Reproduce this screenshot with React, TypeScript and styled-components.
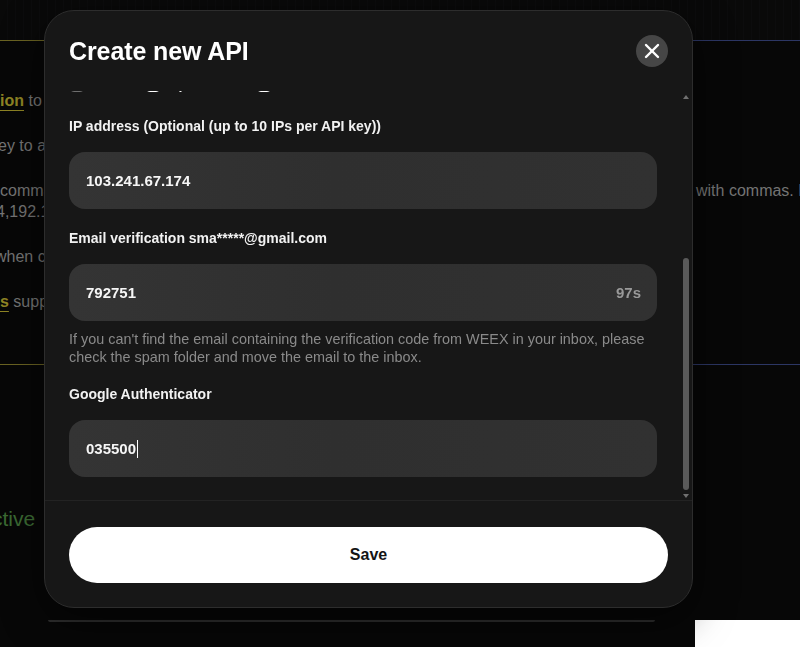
import React, { useEffect, useRef } from "react";
import styled, { createGlobalStyle } from "styled-components";
import { X } from "lucide-react";

const GlobalStyle = createGlobalStyle`
  html, body {
    margin: 0;
    padding: 0;
    background: #070707;
  }
  body {
    font-family: "Liberation Sans", Arial, sans-serif;
    overflow: hidden;
  }
  * {
    box-sizing: border-box;
  }
`;

/* ---------- page behind the dialog ---------- */

const Page = styled.div`
  width: 800px;
  height: 647px;
  overflow: hidden;
  background: #070707;
  display: flex;
  flex-direction: column;
`;

const TopStrip = styled.div`
  height: 40px;
  flex-shrink: 0;
  background: repeating-linear-gradient(90deg, #090909 0 7px, #0c0c0d 7px 8px);
`;

const Notice = styled.section`
  height: 325px;
  flex-shrink: 0;
  border-top: 1px solid;
  border-bottom: 1px solid;
  border-image: linear-gradient(90deg, #6a6322 0%, #6a6322 9%, #2c3664 86%, #2c3664 100%) 1;
  padding-top: 49px;
  display: flex;
  flex-direction: column;
  gap: 24px;
  color: #747474;
  font-size: 16px;
  line-height: 21px;
`;

const Para = styled.p<{ $shift?: number }>`
  margin: 0;
  white-space: nowrap;
  text-indent: ${(p) => p.$shift ?? 0}px;
`;

const SplitLine = styled.div`
  display: flex;
  white-space: nowrap;
`;

const HiddenPart = styled.span`
  flex: 0 0 696px;
`;

const NoticeLink = styled.a`
  color: #8e8424;
  font-weight: 700;
  text-decoration: underline;
  text-underline-offset: 4px;
`;

const StatusText = styled.div`
  margin-top: 142px;
  margin-left: -8px;
  font-size: 21px;
  color: #3b6a33;
`;

const BottomRow = styled.div`
  margin-top: auto;
  height: 27px;
  display: flex;
  align-items: flex-start;
`;

const CardEdge = styled.div`
  margin-left: 48px;
  width: 607px;
  height: 2px;
  background: #2f2f2f;
  border-radius: 0 0 4px 4px;
`;

const WhiteTab = styled.div`
  margin-left: 40px;
  flex: 1;
  align-self: stretch;
  background: #ffffff;
`;

/* ---------- dialog ---------- */

const Modal = styled.div`
  position: fixed;
  top: 10px;
  left: 44px;
  width: 649px;
  height: 598px;
  background: #171717;
  border: 1px solid #2d2d2d;
  border-radius: 30px;
  display: flex;
  flex-direction: column;
  overflow: hidden;
  box-shadow: 0 12px 40px rgba(0, 0, 0, 0.55);
`;

const Header = styled.header`
  display: flex;
  align-items: center;
  justify-content: space-between;
  padding: 24px 24px 24px 24px;
`;

const Title = styled.h2`
  margin: 0;
  font-size: 25px;
  font-weight: 700;
  color: #ffffff;
  letter-spacing: -0.1px;
`;

const CloseButton = styled.button`
  width: 32px;
  height: 32px;
  border: 0;
  border-radius: 50%;
  background: #464646;
  color: #ffffff;
  display: flex;
  align-items: center;
  justify-content: center;
  padding: 0;
`;

const BodyWrap = styled.div`
  position: relative;
  flex: 1;
  min-height: 0;
  display: flex;
`;

const Body = styled.div`
  flex: 1;
  overflow-y: scroll;
  scrollbar-width: none;
  padding: 8px 35px 23px 24px;
  display: flex;
  flex-direction: column;
  gap: 19px;
  &::-webkit-scrollbar {
    display: none;
  }
`;

const ScrollRail = styled.div`
  position: absolute;
  top: 4px;
  bottom: 2px;
  right: 3px;
  width: 7px;
  display: flex;
  flex-direction: column;
  align-items: center;
  pointer-events: none;
`;

const Arrow = styled.span<{ $down?: boolean }>`
  width: 0;
  height: 0;
  border-left: 3px solid transparent;
  border-right: 3px solid transparent;
  ${(p) => (p.$down ? "border-top: 4px solid #707070;" : "border-bottom: 4px solid #707070;")}
`;

const Track = styled.div`
  flex: 1;
  width: 100%;
  display: flex;
  flex-direction: column;
  justify-content: flex-end;
  padding-bottom: 4px;
`;

const Thumb = styled.div`
  height: 232px;
  width: 6px;
  margin: 0 auto;
  border-radius: 3px;
  background: #5a5a5a;
`;

const Field = styled.div<{ $after?: number }>`
  display: flex;
  flex-direction: column;
  flex-shrink: 0;
  margin-bottom: ${(p) => p.$after ?? 0}px;
`;

const Label = styled.label`
  font-size: 14px;
  line-height: 20px;
  font-weight: 700;
  color: #f2f2f2;
  margin-bottom: 16px;
`;

const InputBox = styled.div`
  height: 57px;
  border-radius: 16px;
  background: linear-gradient(90deg, #343434 0%, #2f2f2f 45%, #313131 100%);
  padding: 0 16px 0 17px;
  display: flex;
  align-items: center;
  justify-content: space-between;
  font-size: 15px;
  font-weight: 700;
  color: #f6f6f6;
`;

const Value = styled.span`
  display: flex;
  align-items: center;
`;

const Caret = styled.span`
  width: 1px;
  height: 18px;
  background: #ffffff;
  margin-left: 1px;
`;

const Countdown = styled.span`
  color: #9a9a9a;
`;

const Help = styled.p`
  margin: 9px 0 -1px;
  font-size: 14.4px;
  line-height: 18px;
  color: #8a8a8a;
`;

const Options = styled.div`
  display: flex;
  gap: 18px;
  font-size: 14px;
  line-height: 20px;
  font-weight: 700;
`;

const Option = styled.span<{ $muted?: boolean }>`
  display: flex;
  align-items: center;
  gap: 8px;
  color: ${(p) => (p.$muted ? "#8a8a8a" : "#f2f2f2")};
`;

const Box = styled.span<{ $on?: boolean }>`
  width: 16px;
  height: 16px;
  border-radius: 5px;
  background: ${(p) => (p.$on ? "#ffffff" : "#6e6e6e")};
`;

const Footer = styled.footer`
  border-top: 1px solid #232323;
  padding: 26px 24px 24px 24px;
`;

const SaveButton = styled.button`
  width: 100%;
  height: 56px;
  border: 0;
  border-radius: 28px;
  background: #ffffff;
  color: #141414;
  font-family: "Liberation Sans", Arial, sans-serif;
  font-size: 16px;
  font-weight: 700;
`;

export default function App() {
  const bodyRef = useRef<HTMLDivElement>(null);

  useEffect(() => {
    const el = bodyRef.current;
    if (el) el.scrollTop = el.scrollHeight;
  }, []);

  return (
    <>
      <GlobalStyle />
      <Page>
        <TopStrip />
        <Notice>
          <Para>
            <NoticeLink>ion</NoticeLink> to view the API documentation before you begin.
          </Para>
          <Para $shift={-2}>ey to access your account through third-party tools.</Para>
          <div>
            <SplitLine>
              <HiddenPart>commas to bind several IP addresses to one key, separated</HiddenPart>
              <span>with commas. For example: 192.168.0.1,192.168.0.2</span>
            </SplitLine>
            <Para $shift={-4}>4,192.168.1.1 and so on.</Para>
          </div>
          <Para $shift={-5}>when creating a key without binding an IP address.</Para>
          <Para>
            <NoticeLink>s</NoticeLink> supported for every API key.
          </Para>
        </Notice>
        <StatusText>ctive</StatusText>
        <BottomRow>
          <CardEdge />
          <WhiteTab />
        </BottomRow>
      </Page>

      <Modal>
        <Header>
          <Title>Create new API</Title>
          <CloseButton aria-label="Close">
            <X size={24} strokeWidth={2.4} />
          </CloseButton>
        </Header>

        <BodyWrap>
          <Body ref={bodyRef}>
            <Field>
              <Label>Notes</Label>
              <InputBox>
                <Value>Trading bot</Value>
              </InputBox>
            </Field>
            <Field $after={3}>
              <Label>Permissions</Label>
              <Options>
                <Option $muted>
                  <Box /> Read
                </Option>
                <Option>
                  <Box $on /> Spot trade
                </Option>
                <Option>
                  <Box $on /> Futures
                </Option>
              </Options>
            </Field>
            <Field>
              <Label>IP address (Optional (up to 10 IPs per API key))</Label>
              <InputBox>
                <Value>103.241.67.174</Value>
              </InputBox>
            </Field>
            <Field>
              <Label>Email verification sma*****@gmail.com</Label>
              <InputBox>
                <Value>792751</Value>
                <Countdown>97s</Countdown>
              </InputBox>
              <Help>
                If you can't find the email containing the verification code from WEEX in your inbox, please
                check the spam folder and move the email to the inbox.
              </Help>
            </Field>
            <Field>
              <Label>Google Authenticator</Label>
              <InputBox>
                <Value>
                  035500
                  <Caret />
                </Value>
              </InputBox>
            </Field>
          </Body>
          <ScrollRail>
            <Arrow />
            <Track>
              <Thumb />
            </Track>
            <Arrow $down />
          </ScrollRail>
        </BodyWrap>

        <Footer>
          <SaveButton>Save</SaveButton>
        </Footer>
      </Modal>
    </>
  );
}
